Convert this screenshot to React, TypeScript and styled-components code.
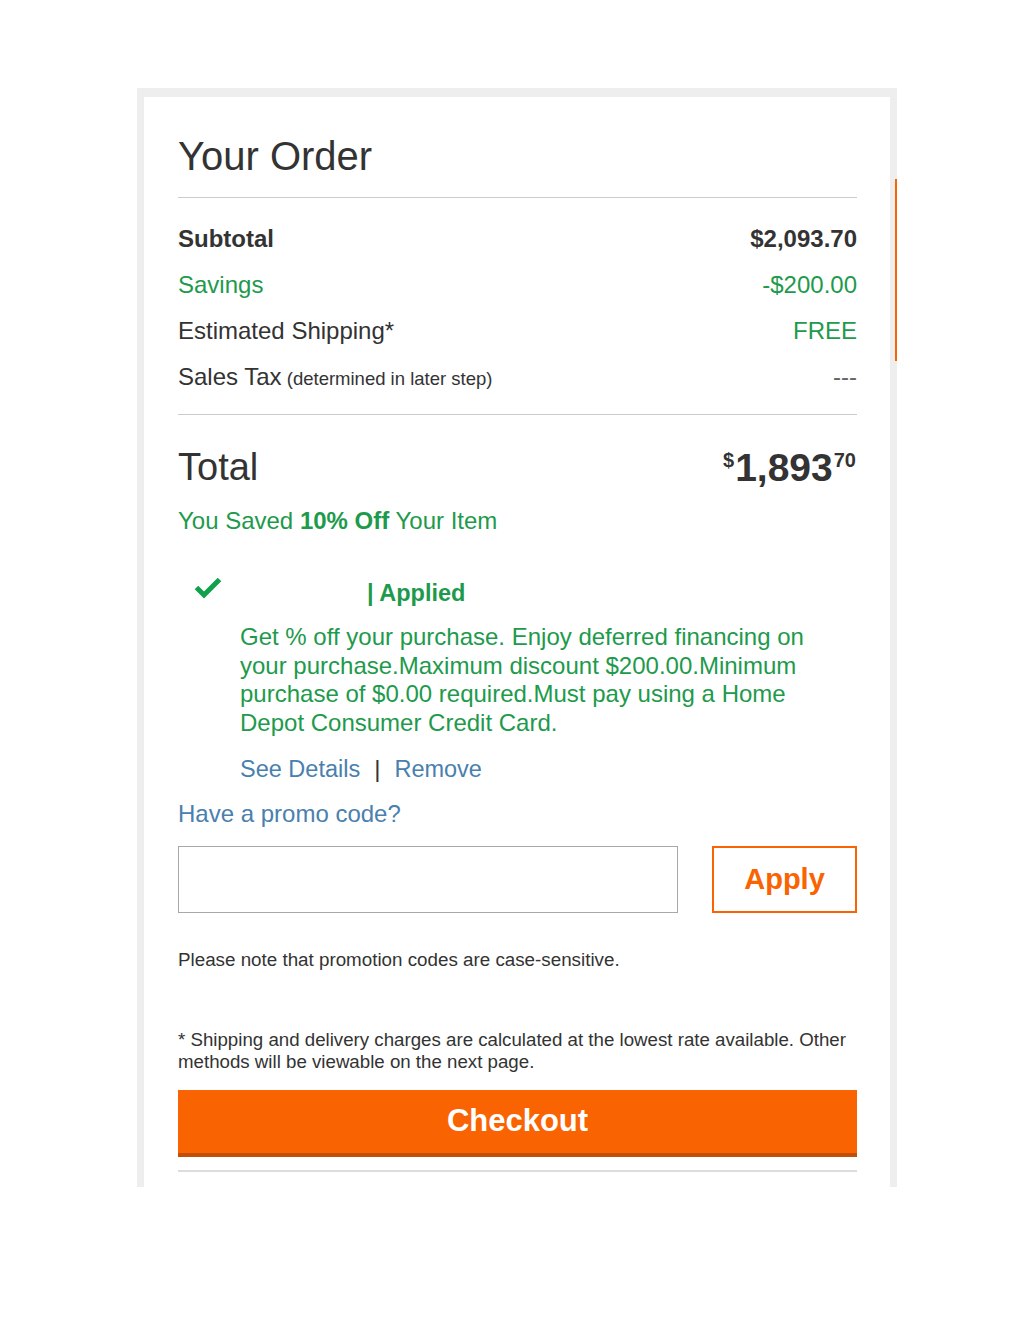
import styled, { createGlobalStyle } from "styled-components";

const GlobalStyle = createGlobalStyle`
    body {
        margin: 0;
        background: #fff;
        font-family: "Liberation Sans", Arial, sans-serif;
        color: #333;
    }
`;

interface LineItem {
    label: string;
    note?: string;
    value: string;
    tone?: "bold" | "green" | "plain" | "muted";
}

const lineItems: LineItem[] = [
    { label: "Subtotal", value: "$2,093.70", tone: "bold" },
    { label: "Savings", value: "-$200.00", tone: "green" },
    { label: "Estimated Shipping*", value: "FREE", tone: "plain" },
    { label: "Sales Tax", note: "(determined in later step)", value: "---", tone: "muted" },
];

const CheckIcon = () => (
    <svg width="28" height="24" viewBox="0 0 28 24" aria-hidden="true">
        <path
            d="M2.5 12.5 L10 20 L25.5 4.5"
            fill="none"
            stroke="#12a04c"
            strokeWidth="5"
            strokeLinejoin="miter"
        />
    </svg>
);

export default function App() {
    return (
        <>
            <GlobalStyle />
            <StyledFrame>
                <StyledScrollMark />
                <StyledCard>
                    <StyledTitle>Your Order</StyledTitle>

                    <StyledSummary>
                        {lineItems.map((item) => (
                            <StyledRow key={item.label} $tone={item.tone}>
                                <StyledLabel>
                                    {item.label}
                                    {item.note && <StyledNote> {item.note}</StyledNote>}
                                </StyledLabel>
                                <StyledValue $tone={item.tone}>{item.value}</StyledValue>
                            </StyledRow>
                        ))}
                    </StyledSummary>

                    <StyledTotalRow>
                        <StyledTotalLabel>Total</StyledTotalLabel>
                        <StyledTotalAmount>
                            <StyledSup>$</StyledSup>
                            <span>1,893</span>
                            <StyledSup>70</StyledSup>
                        </StyledTotalAmount>
                    </StyledTotalRow>

                    <StyledSaved>
                        You Saved <strong>10% Off</strong> Your Item
                    </StyledSaved>

                    <StyledPromoBlock>
                        <StyledAppliedRow>
                            <CheckIcon />
                            <StyledCardArt />
                            <StyledApplied>| Applied</StyledApplied>
                        </StyledAppliedRow>
                        <StyledPromoText>
                            Get % off your purchase. Enjoy deferred financing on your
                            purchase.Maximum discount $200.00.Minimum purchase of $0.00
                            required.Must pay using a Home Depot Consumer Credit Card.
                        </StyledPromoText>
                        <StyledLinks>
                            <StyledLink href="#">See Details</StyledLink>
                            <StyledPipe>|</StyledPipe>
                            <StyledLink href="#">Remove</StyledLink>
                        </StyledLinks>
                    </StyledPromoBlock>

                    <StyledPromoLink href="#">Have a promo code?</StyledPromoLink>

                    <StyledPromoForm>
                        <StyledInput type="text" aria-label="Promo code" />
                        <StyledApplyButton type="button">Apply</StyledApplyButton>
                    </StyledPromoForm>

                    <StyledSmallPrint>
                        Please note that promotion codes are case-sensitive.
                    </StyledSmallPrint>

                    <StyledFootnote>
                        * Shipping and delivery charges are calculated at the lowest rate
                        available. Other methods will be viewable on the next page.
                    </StyledFootnote>

                    <StyledCheckout type="button">Checkout</StyledCheckout>
                    <StyledBottomRule />
                </StyledCard>
            </StyledFrame>
        </>
    );
}

const green = "#1e9a4c";
const blue = "#4a80ad";
const orange = "#f96302";

const StyledFrame = styled.div`
    position: relative;
    width: 746px;
    margin: 88px 0 0 137px;
    border: solid #eeeeee;
    border-width: 9px 7px 0 7px;
`;

const StyledScrollMark = styled.div`
    position: absolute;
    top: 82px;
    right: -7px;
    width: 2px;
    height: 182px;
    background: ${orange};
`;

const StyledCard = styled.div`
    background: #fff;
    padding: 35px 33px 15px 34px;
    display: flex;
    flex-direction: column;
`;

const StyledTitle = styled.h1`
    margin: 0;
    font-size: 40px;
    line-height: 48px;
    font-weight: 400;
    color: #333;
    padding-bottom: 17px;
    border-bottom: 1px solid #cccccc;
`;

const StyledSummary = styled.div`
    padding: 18px 0 14px;
    border-bottom: 1px solid #cccccc;
`;

const StyledRow = styled.div<{ $tone?: LineItem["tone"] }>`
    display: flex;
    justify-content: space-between;
    align-items: baseline;
    height: 46px;
    line-height: 46px;
    font-size: 24px;
    color: ${({ $tone }) => ($tone === "green" ? green : "#333")};
    font-weight: ${({ $tone }) => ($tone === "bold" ? 700 : 400)};
`;

const StyledLabel = styled.div`
    white-space: nowrap;
`;

const StyledNote = styled.span`
    font-size: 18.5px;
`;

const StyledValue = styled.div<{ $tone?: LineItem["tone"] }>`
    color: ${({ $tone }) =>
        $tone === "green" || $tone === "plain" ? green : $tone === "muted" ? "#666" : "#333"};
`;

const StyledTotalRow = styled.div`
    display: flex;
    justify-content: space-between;
    align-items: center;
    margin-top: 29px;
    height: 46px;
`;

const StyledTotalLabel = styled.div`
    font-size: 38px;
    line-height: 46px;
    color: #333;
`;

const StyledTotalAmount = styled.div`
    display: flex;
    align-items: flex-start;
    font-size: 39px;
    line-height: 1;
    font-weight: 700;
    color: #333;
`;

const StyledSup = styled.span`
    font-size: 20px;
    line-height: 1;
    margin: 2px 1px 0;
    font-weight: 700;
`;

const StyledSaved = styled.div`
    margin-top: 16px;
    font-size: 24px;
    line-height: 30px;
    color: ${green};

    strong {
        font-weight: 700;
    }
`;

const StyledPromoBlock = styled.div`
    margin-top: 42px;
    display: flex;
    flex-direction: column;
`;

const StyledAppliedRow = styled.div`
    display: flex;
    align-items: center;
    height: 30px;
    padding-left: 16px;

    svg {
        margin-top: -12px;
    }
`;

const StyledCardArt = styled.div`
    width: 145px;
    height: 30px;
`;

const StyledApplied = styled.span`
    font-size: 23.5px;
    line-height: 30px;
    font-weight: 700;
    color: ${green};
`;

const StyledPromoText = styled.p`
    margin: 15px 0 0 62px;
    max-width: 580px;
    font-size: 24px;
    line-height: 28.7px;
    color: ${green};
`;

const StyledLinks = styled.div`
    margin: 16px 0 0 62px;
    display: flex;
    align-items: center;
    gap: 14px;
    font-size: 23.5px;
    line-height: 30px;
`;

const StyledLink = styled.a`
    color: ${blue};
    text-decoration: none;
`;

const StyledPipe = styled.span`
    color: #333;
    font-size: 24px;
`;

const StyledPromoLink = styled.a`
    margin-top: 15px;
    font-size: 24px;
    line-height: 30px;
    color: ${blue};
    text-decoration: none;
    align-self: flex-start;
`;

const StyledPromoForm = styled.div`
    margin-top: 17px;
    display: flex;
    justify-content: space-between;
    height: 67px;
`;

const StyledInput = styled.input`
    box-sizing: border-box;
    width: 500px;
    height: 67px;
    margin: 0;
    border: 1px solid #a8a8a8;
    font-size: 22px;
    padding: 0 12px;
    outline: none;
`;

const StyledApplyButton = styled.button`
    box-sizing: border-box;
    width: 145px;
    height: 67px;
    margin: 0;
    background: #fff;
    border: 2px solid ${orange};
    color: ${orange};
    font-family: "Liberation Sans", Arial, sans-serif;
    font-size: 29px;
    font-weight: 700;
    cursor: pointer;
`;

const StyledSmallPrint = styled.p`
    margin: 36px 0 0;
    font-size: 18.8px;
    line-height: 22px;
    color: #333;
`;

const StyledFootnote = styled.p`
    margin: 58px 0 0;
    font-size: 18.7px;
    line-height: 22px;
    color: #333;
`;

const StyledCheckout = styled.button`
    box-sizing: border-box;
    margin-top: 17px;
    height: 67px;
    width: 100%;
    background: ${orange};
    border: none;
    border-bottom: 4px solid #c24f05;
    color: #fff;
    font-family: "Liberation Sans", Arial, sans-serif;
    font-size: 31px;
    font-weight: 700;
    cursor: pointer;
`;

const StyledBottomRule = styled.div`
    margin-top: 13px;
    height: 2px;
    background: #dddddd;
`;
